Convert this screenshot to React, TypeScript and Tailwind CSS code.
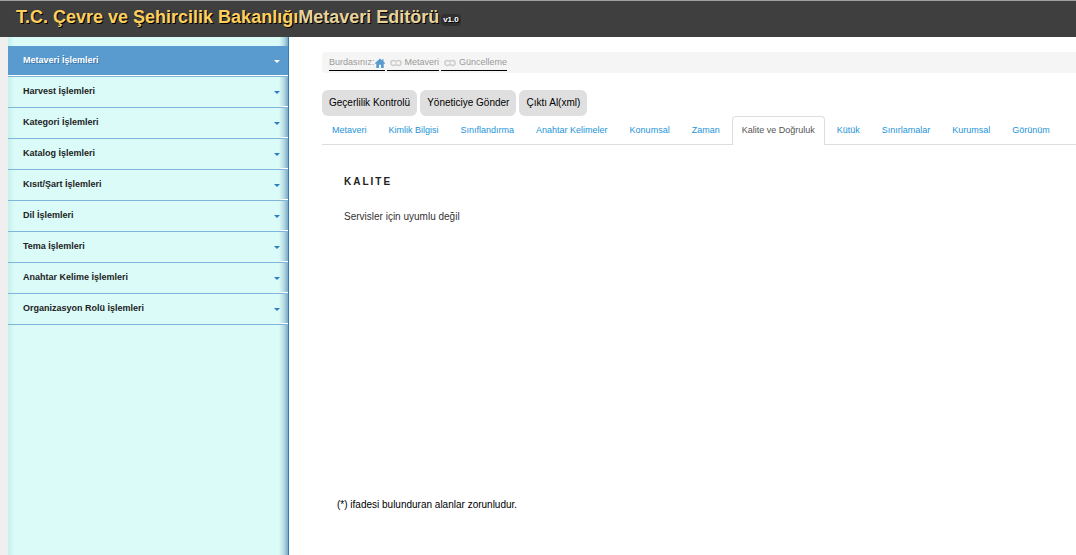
import type { ReactNode } from "react";

const menu = [
  "Metaveri İşlemleri",
  "Harvest İşlemleri",
  "Kategori İşlemleri",
  "Katalog İşlemleri",
  "Kısıt/Şart İşlemleri",
  "Dil İşlemleri",
  "Tema İşlemleri",
  "Anahtar Kelime İşlemleri",
  "Organizasyon Rolü İşlemleri",
];

const tabs = [
  "Metaveri",
  "Kimlik Bilgisi",
  "Sınıflandırma",
  "Anahtar Kelimeler",
  "Konumsal",
  "Zaman",
  "Kalite ve Doğruluk",
  "Kütük",
  "Sınırlamalar",
  "Kurumsal",
  "Görünüm",
];

const actions = ["Geçerlilik Kontrolü", "Yöneticiye Gönder", "Çıktı Al(xml)"];

function Caret() {
  return (
    <svg className="mt-1 h-[3px] w-1.5" viewBox="0 0 6 3" fill="currentColor" aria-hidden="true">
      <path d="M0 0h6L3 3z" />
    </svg>
  );
}

function HomeIcon() {
  return (
    <svg className="mt-0.5 h-[10px] w-[10px] text-[#5a9bcf]" viewBox="0 0 10 10" fill="currentColor" aria-hidden="true">
      <path d="M5 .4 7.300 2.500V1.200h1.200v2.400L10 5v.7H8.700V10H6V6.800H4V10H1.300V5.700H0V5z" />
    </svg>
  );
}

function LinkIcon() {
  return (
    <svg className="mt-0.5 h-2 w-3 text-[#cdcdcd]" viewBox="0 0 12 8" fill="none" stroke="currentColor" strokeWidth="1.5" aria-hidden="true">
      <path d="M5.600 5.600C5 6.200 4.400 6.400 3.500 6.400 1.800 6.400.9 5.400.9 4s.9-2.400 2.600-2.400c1.600 0 2.500.8 2.700 2" />
      <path d="M6.400 2.400C7 1.800 7.600 1.600 8.500 1.600c1.700 0 2.600 1 2.600 2.400s-.9 2.400-2.600 2.400c-1.600 0-2.500-.8-2.700-2" />
    </svg>
  );
}

function Crumb({ children }: { children: ReactNode }) {
  return <li className="flex h-[17px] items-center border-b border-black">{children}</li>;
}

export default function App() {
  return (
    <div className="flex min-h-screen flex-col bg-white font-['Liberation_Sans',Arial,sans-serif] text-[10px] leading-4 text-black">
      <header className="flex h-[37px] shrink-0 items-center border-t border-[#a0a0a0] bg-[#3f3f3f] px-4 pb-1">
        <h1 className="flex items-center whitespace-nowrap text-lg leading-6 font-bold text-[#ffcf5c] [text-shadow:1px_1px_0_#000]">
          T.C. Çevre ve Şehircilik Bakanlığı
          <span className="text-[#e8d39a]">Metaveri Editörü</span>
          <small className="mt-1.5 ml-0.5 rounded-sm bg-[#303030] px-0.5 text-[8px] leading-3 text-white">v1.0</small>
        </h1>
      </header>

      <div className="flex flex-1">
        <nav aria-label="Menü" className="w-[289px] shrink-0 border-l-8 border-r border-l-[#efefef] border-r-[#2e7dbd] bg-[#dafbf8] bg-[linear-gradient(to_right,#c4f0ee,transparent_6px),linear-gradient(to_left,#7ba9c6,#b5dbe2_4px,transparent_9px)] pt-[9px]">
          <ul>
            {menu.map((m, i) => (
              <li key={m} className="border-b border-[#7fb5da]">
                <button
                  type="button"
                  className={
                    i === 0
                      ? "flex h-[30px] w-full items-center justify-between border-b border-white bg-[#5a9bcf] pr-2 pl-[15px] pb-0.5 text-[9px] leading-3 font-bold text-white [text-shadow:1px_1px_0_#3a76a8]"
                      : "flex h-[30px] w-full items-center justify-between border-b border-transparent pr-2 pl-[15px] pb-0.5 text-[9px] leading-3 font-bold text-[#222] [border-image:linear-gradient(to_right,transparent_96%,#fff_98%)_1]"
                  }
                >
                  {m}
                  <span className={i === 0 ? "text-white" : "text-[#2e7dbd]"}>
                    <Caret />
                  </span>
                </button>
              </li>
            ))}
          </ul>
        </nav>

        <main className="min-w-0 flex-1 overflow-hidden pt-[15px] pl-[33px]">
          <nav aria-label="Konum" className="h-[21px] rounded-l-sm bg-[#f5f5f5] pt-0.5 pl-[7px]">
            <ol className="flex gap-0.5 text-[9px] leading-4 text-[#999]">
              <Crumb>
                <span>Burdasınız:</span>
                <a href="#home" aria-label="Ana sayfa">
                  <HomeIcon />
                </a>
              </Crumb>
              <Crumb>
                <a href="#metaveri" className="flex items-center gap-[3px] pl-[3px]">
                  <LinkIcon />
                  Metaveri
                </a>
              </Crumb>
              <Crumb>
                <a href="#guncelleme" className="flex items-center gap-[3px] pl-[3px]">
                  <LinkIcon />
                  Güncelleme
                </a>
              </Crumb>
            </ol>
          </nav>

          <div className="mt-[17px] flex gap-[3px]">
            {actions.map((a) => (
              <button key={a} type="button" className="h-[26px] rounded-md bg-[#dfdfdf] px-[7px] whitespace-nowrap">
                {a}
              </button>
            ))}
          </div>

          <div role="tablist" className="flex gap-0.5 border-b border-[#ddd] text-[9px]">
            {tabs.map((t) => (
              <button
                key={t}
                type="button"
                role="tab"
                aria-selected={t === "Kalite ve Doğruluk"}
                className={
                  t === "Kalite ve Doğruluk"
                    ? "-mb-px h-[29px] shrink-0 rounded-t border border-b-0 border-[#ddd] bg-white px-[9px] pb-0.5 whitespace-nowrap text-[#555]"
                    : "h-7 shrink-0 border-x border-transparent px-[9px] whitespace-nowrap text-[#1c94d8]"
                }
              >
                {t}
              </button>
            ))}
          </div>

          <section role="tabpanel" className="pt-[29px] pl-[22px] text-[#333]">
            <h2 className="font-bold tracking-[2px] text-[#222]">KALITE</h2>
            <p className="mt-[19px]">Servisler için uyumlu değil</p>
          </section>
          <p className="mt-[272px] pl-[15px]">(*) ifadesi bulunduran alanlar zorunludur.</p>
        </main>
      </div>
    </div>
  );
}
